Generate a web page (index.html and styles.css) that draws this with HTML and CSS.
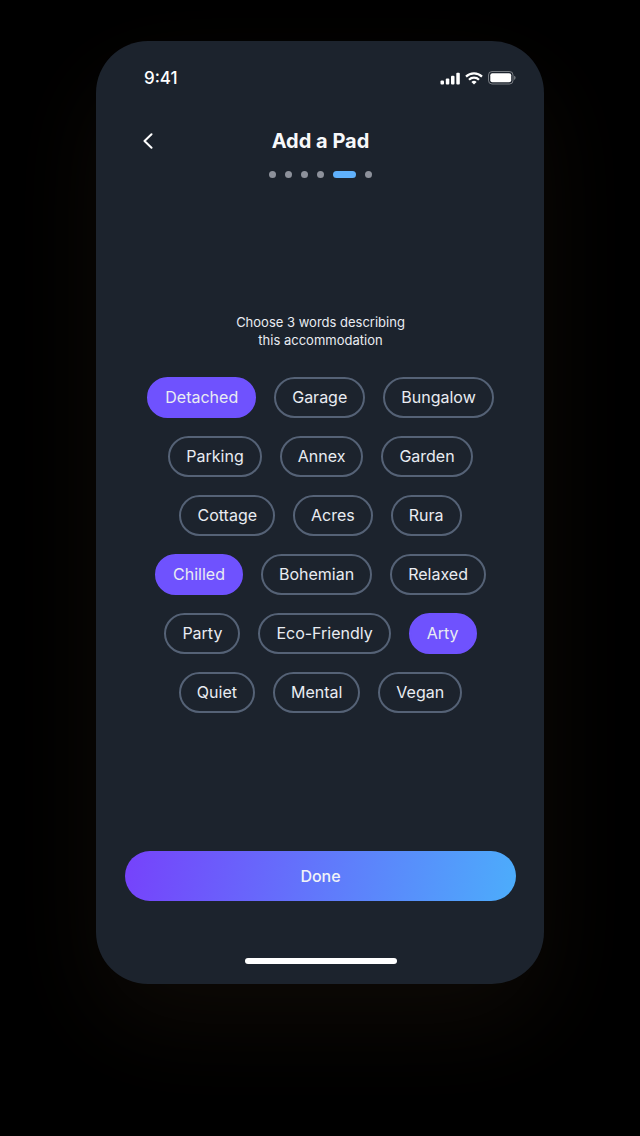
FILE: index.html
```html
<!DOCTYPE html>
<html lang="en">
    <head>
        <meta charset="utf-8">
        <meta name="viewport" content="width=device-width, initial-scale=1">
        <title>Add a Pad</title>
        <link rel="stylesheet" href="styles.css">
    </head>
    <body>
        <div class="phone">
            <div class="status-bar">
                <span class="time">9:41</span>
                <div class="status-icons">
                    <svg width="20" height="13" viewBox="0 0 20 13" fill="#fff">
                        <rect x="0.5" y="8.5" width="3.5" height="4" rx="1"/>
                        <rect x="5.8" y="6.5" width="3.5" height="6" rx="1"/>
                        <rect x="11" y="3.8" width="3.5" height="8.7" rx="1"/>
                        <rect x="16.3" y="0.8" width="3.5" height="11.7" rx="1"/>
                    </svg>
                    <svg width="18" height="13" viewBox="0 0 18 13" fill="none" stroke="#fff" stroke-width="2.2">
                        <path d="M1 4.6a11.3 11.3 0 0 1 16 0"/>
                        <path d="M4 7.8a7 7 0 0 1 10 0"/>
                        <path d="M9 12.6L6.4 9.9a3.8 3.8 0 0 1 5.2 0z" fill="#fff" stroke="none"/>
                    </svg>
                    <svg width="28" height="14" viewBox="0 0 28 14">
                        <rect x="0.5" y="0.5" width="24.5" height="12.5" rx="3.5" fill="none" stroke="#fff" stroke-opacity="0.4"/>
                        <rect x="2.3" y="2.3" width="20.9" height="8.9" rx="2" fill="#fff"/>
                        <path d="M26.2 4.7v4.2a2.3 2.3 0 0 0 0-4.2z" fill="#fff" fill-opacity="0.45"/>
                    </svg>
                </div>
            </div>

            <header class="header">
                <a class="back" href="#" aria-label="Back">
                    <svg width="10" height="16" viewBox="0 0 10 16" fill="none" stroke="#fff" stroke-width="2" stroke-linecap="round" stroke-linejoin="round">
                        <path d="M8.5 1.2L1.5 8l7 6.8"/>
                    </svg>
                </a>
                <h1 class="title">Add a Pad</h1>
            </header>

            <div class="steps">
                <span class="step"></span>
                <span class="step"></span>
                <span class="step"></span>
                <span class="step"></span>
                <span class="step active"></span>
                <span class="step"></span>
            </div>

            <form class="form">
                <fieldset class="words">
                    <legend class="prompt">Choose 3 words describing<br>this accommodation</legend>
                    <div class="chips">
                        <label class="chip"><input type="checkbox" name="word" value="detached" checked>Detached</label>
                        <label class="chip"><input type="checkbox" name="word" value="garage">Garage</label>
                        <label class="chip"><input type="checkbox" name="word" value="bungalow">Bungalow</label>
                        <label class="chip"><input type="checkbox" name="word" value="parking">Parking</label>
                        <label class="chip"><input type="checkbox" name="word" value="annex">Annex</label>
                        <label class="chip"><input type="checkbox" name="word" value="garden">Garden</label>
                        <label class="chip"><input type="checkbox" name="word" value="cottage">Cottage</label>
                        <label class="chip"><input type="checkbox" name="word" value="acres">Acres</label>
                        <label class="chip"><input type="checkbox" name="word" value="rura">Rura</label>
                        <label class="chip"><input type="checkbox" name="word" value="chilled" checked>Chilled</label>
                        <label class="chip"><input type="checkbox" name="word" value="bohemian">Bohemian</label>
                        <label class="chip"><input type="checkbox" name="word" value="relaxed">Relaxed</label>
                        <label class="chip"><input type="checkbox" name="word" value="party">Party</label>
                        <label class="chip"><input type="checkbox" name="word" value="eco-friendly">Eco-Friendly</label>
                        <label class="chip"><input type="checkbox" name="word" value="arty" checked>Arty</label>
                        <label class="chip"><input type="checkbox" name="word" value="quiet">Quiet</label>
                        <label class="chip"><input type="checkbox" name="word" value="mental">Mental</label>
                        <label class="chip"><input type="checkbox" name="word" value="vegan">Vegan</label>
                    </div>
                </fieldset>
                <button class="done" type="button">Done</button>
            </form>

            <div class="home-indicator"></div>
        </div>
    </body>
</html>
```

FILE: styles.css
```css
* {
    box-sizing: border-box;
}
body {
    margin: 0;
    min-height: 100vh;
    padding: 41px 15% 152px;
    display: flex;
    background: #000;
    color: #e9ecf2;
    font-family: Inter, "Liberation Sans", sans-serif;
}
.phone {
    flex: 1;
    display: flex;
    flex-direction: column;
    padding: 27px 28px 20px 29px;
    border-radius: 52px;
    background: #1c232d;
    box-shadow: 0 40px 100px #0e0a06;
}

/* status bar */
.status-bar {
    display: flex;
    justify-content: space-between;
    align-items: center;
    padding-left: 19px;
}
.time {
    color: #fff;
    font-size: 17px;
    line-height: 20px;
    font-weight: 500;
}
.status-icons {
    display: flex;
    align-items: center;
    gap: 5px;
}

/* header */
.header {
    display: grid;
    grid-template-columns: 1fr auto 1fr;
    align-items: center;
    margin-top: 41px;
    padding: 0 18px;
}
.back {
    display: flex;
}
.title {
    margin: 0;
    color: #f7f8fa;
    font-size: 20px;
    line-height: 24px;
    font-weight: 700;
}
.steps {
    display: flex;
    justify-content: center;
    gap: 9px;
    margin-top: 18px;
}
.step {
    width: 7px;
    height: 7px;
    border-radius: 4px;
    background: #8d919b;
}
.step.active {
    width: 23px;
    background: #5fb0fb;
}

/* word picker */
.form {
    flex: 1;
    display: flex;
    flex-direction: column;
    justify-content: space-between;
    padding-top: 135px;
}
.words {
    margin: 0;
    padding: 0 15px;
    border: 0;
}
.prompt {
    width: 100%;
    padding: 0;
    font-size: 13px;
    line-height: 18px;
    text-align: center;
}
.chips {
    display: flex;
    flex-wrap: wrap;
    justify-content: center;
    gap: 18px;
    margin-top: 28px;
}
.chip {
    position: relative;
    padding: 9px 16px;
    border: 2px solid #556276;
    border-radius: 21px;
    font-size: 16px;
    line-height: 19px;
    cursor: pointer;
}
.chip input {
    position: absolute;
    inset: 0;
    margin: 0;
    opacity: 0;
    cursor: pointer;
}
.chip:has(input:checked) {
    border-color: #6f52fe;
    background: #6f52fe;
}
.chip:has(input:focus-visible) {
    outline: 2px solid #5fb0fb;
}
.done {
    height: 50px;
    border: 0;
    border-radius: 25px;
    background: linear-gradient(100deg, #7642fb, #4cadfb);
    color: #f1f3f7;
    font-family: inherit;
    font-size: 16px;
    font-weight: 500;
    cursor: pointer;
}
.home-indicator {
    width: 152px;
    height: 6px;
    margin: 57px auto 0;
    border-radius: 3px;
    background: #fff;
}
```
